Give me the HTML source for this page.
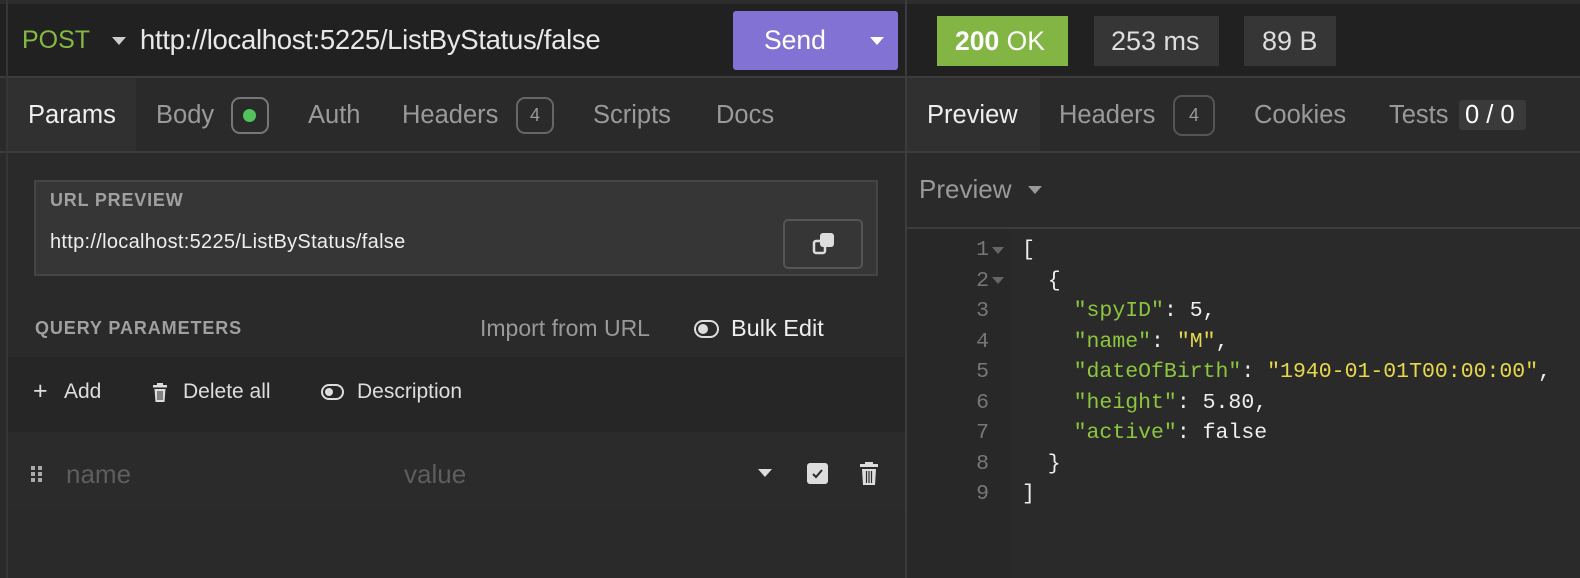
<!DOCTYPE html>
<html><head><meta charset="utf-8"><style>
*{margin:0;padding:0;box-sizing:border-box}
body{width:1580px;height:578px;background:#2a2a2a;font-family:"Liberation Sans",Arial,sans-serif;position:relative;overflow:hidden;color:#ddd}
.a{position:absolute;white-space:nowrap}
.t{font-size:25.5px}
.mono{font-family:"Liberation Mono",monospace;font-size:21.5px}
</style></head><body>
<div class="a" style="left:0;top:0;width:1580px;height:76px;background:#212121"></div>
<div class="a" style="left:0;top:0;width:1580px;height:4px;background:#2c2c2c"></div>
<div class="a" style="left:0;top:76px;width:1580px;height:2px;background:#3c3c3c"></div>
<div class="a" style="left:0;top:151px;width:1580px;height:2px;background:#3c3c3c"></div>
<div class="a" style="left:905px;top:0;width:2px;height:578px;background:#3c3c3c"></div>
<div class="a" style="left:6px;top:0;width:2px;height:578px;background:#363636"></div>
<div class="a" style="left:22px;top:26px;color:#86b944;font-size:25px">POST</div>
<svg class="a" style="left:111px;top:36px" width="16" height="10"><path d="M1 1h14l-7 8z" fill="#ccc"/></svg>
<div class="a" style="left:140px;top:24px;color:#e8e8e8;font-size:27.5px;letter-spacing:-0.3px">http://localhost:5225/ListByStatus/false</div>
<div class="a" style="left:733px;top:11px;width:165px;height:59px;background:#8172d3;border-radius:3px"></div>
<div class="a" style="left:764px;top:25px;color:#fff;font-size:26.5px">Send</div>
<svg class="a" style="left:869px;top:36px" width="16" height="10"><path d="M1 1h14l-7 8z" fill="#fff"/></svg>
<div class="a" style="left:937px;top:16px;width:131px;height:50px;background:#82b544"></div>
<div class="a" style="left:955px;top:26px;color:#fff;font-size:26.5px"><b>200</b> OK</div>
<div class="a" style="left:1094px;top:16px;width:125px;height:50px;background:#363636"></div>
<div class="a" style="left:1111px;top:26px;color:#ddd;font-size:27px">253 ms</div>
<div class="a" style="left:1244px;top:16px;width:92px;height:50px;background:#363636"></div>
<div class="a" style="left:1262px;top:26px;color:#ddd;font-size:27px">89 B</div>
<div class="a" style="left:8px;top:78px;width:128px;height:73px;background:#303030"></div>
<div class="a t" style="left:28px;top:101px;color:#eee">Params</div>
<div class="a t" style="left:156px;top:101px;color:#9a9a9a">Body</div>
<div class="a" style="left:231px;top:97px;width:38px;height:37px;border:2px solid #777;border-radius:9px"></div>
<div class="a" style="left:243px;top:109px;width:13px;height:13px;border-radius:50%;background:#53c15c"></div>
<div class="a t" style="left:308px;top:101px;color:#9a9a9a">Auth</div>
<div class="a t" style="left:402px;top:101px;color:#9a9a9a">Headers</div>
<div class="a" style="left:516px;top:97px;width:38px;height:37px;border:2px solid #666;border-radius:9px;color:#999;font-size:18px;text-align:center;line-height:33px">4</div>
<div class="a t" style="left:593px;top:101px;color:#9a9a9a">Scripts</div>
<div class="a t" style="left:716px;top:101px;color:#9a9a9a">Docs</div>
<div class="a" style="left:907px;top:78px;width:133px;height:73px;background:#303030"></div>
<div class="a t" style="left:927px;top:101px;color:#eee">Preview</div>
<div class="a t" style="left:1059px;top:101px;color:#9a9a9a">Headers</div>
<div class="a" style="left:1173px;top:95px;width:42px;height:41px;border:2px solid #555;border-radius:9px;color:#999;font-size:18px;text-align:center;line-height:37px">4</div>
<div class="a t" style="left:1254px;top:101px;color:#9a9a9a">Cookies</div>
<div class="a t" style="left:1389px;top:101px;color:#9a9a9a">Tests</div>
<div class="a" style="left:1459px;top:100px;width:67px;height:30px;background:#3a3a3a;border-radius:3px;color:#fff;padding-left:6px;line-height:30px;font-size:25.5px">0 / 0</div>
<div class="a" style="left:34px;top:180px;width:844px;height:96px;background:#363636;border:2px solid #454545"></div>
<div class="a" style="left:50px;top:190px;font-size:18px;font-weight:bold;color:#a0a0a0;letter-spacing:0.8px">URL PREVIEW</div>
<div class="a" style="left:50px;top:231px;font-size:20px;color:#eee;letter-spacing:0.3px">http://localhost:5225/ListByStatus/false</div>
<div class="a" style="left:783px;top:219px;width:80px;height:50px;border:2px solid #555;border-radius:5px"></div>
<svg class="a" style="left:812px;top:231px" width="24" height="26"><rect x="2" y="10" width="11" height="12" rx="2" fill="none" stroke="#ddd" stroke-width="2.5"/><rect x="8" y="2" width="14" height="14" rx="3" fill="#ddd"/></svg>
<div class="a" style="left:35px;top:318px;font-size:18px;font-weight:bold;color:#a0a0a0;letter-spacing:0.9px">QUERY PARAMETERS</div>
<div class="a" style="left:480px;top:315px;font-size:23px;color:#999">Import from URL</div>
<div class="a" style="left:694px;top:320px;width:25px;height:18px;border:2.5px solid #ddd;border-radius:9px"></div>
<div class="a" style="left:698px;top:324px;width:10px;height:10px;border-radius:50%;background:#ddd"></div>
<div class="a" style="left:731px;top:315px;font-size:23.5px;color:#eee">Bulk Edit</div>
<div class="a" style="left:8px;top:357px;width:897px;height:75px;background:#262626"></div>
<div class="a" style="left:33px;top:377px;font-size:25px;color:#ddd">+</div>
<div class="a" style="left:64px;top:380px;font-size:21px;color:#ddd">Add</div>
<svg class="a" style="left:152px;top:383px" width="16" height="20"><rect x="1" y="2" width="14" height="2.5" fill="#ddd"/><rect x="5" y="0" width="6" height="2" fill="#ddd"/><path d="M2.5 6h11l-1 13h-9z" fill="#ddd"/><path d="M6 8v9M8 8v9M10 8v9" stroke="#262626" stroke-width="1"/></svg>
<div class="a" style="left:183px;top:380px;font-size:21px;color:#ddd">Delete all</div>
<div class="a" style="left:321px;top:384px;width:23px;height:16px;border:2.5px solid #ddd;border-radius:8px"></div>
<div class="a" style="left:325px;top:388px;width:8px;height:8px;border-radius:50%;background:#ddd"></div>
<div class="a" style="left:357px;top:380px;font-size:21px;color:#ddd">Description</div>
<div class="a" style="left:8px;top:432px;width:897px;height:78px;background:#2b2b2b"></div>
<svg class="a" style="left:30px;top:465px" width="14" height="18"><g fill="#aaa"><rect x="1" y="1" width="4" height="4"/><rect x="8" y="1" width="4" height="4"/><rect x="1" y="7" width="4" height="4"/><rect x="8" y="7" width="4" height="4"/><rect x="1" y="13" width="4" height="4"/><rect x="8" y="13" width="4" height="4"/></g></svg>
<div class="a" style="left:66px;top:459px;color:#5e5e5e;font-size:26px">name</div>
<div class="a" style="left:404px;top:459px;color:#5e5e5e;font-size:26px">value</div>
<svg class="a" style="left:757px;top:468px" width="16" height="10"><path d="M1 1h14l-7 8z" fill="#ddd"/></svg>
<div class="a" style="left:807px;top:463px;width:21px;height:21px;background:#ddd;border-radius:3px"></div>
<svg class="a" style="left:810px;top:466px" width="15" height="15"><path d="M3 8l3 3 6-7" fill="none" stroke="#2a2a2a" stroke-width="2"/></svg>
<svg class="a" style="left:859px;top:462px" width="20" height="24"><rect x="1" y="2" width="18" height="3" fill="#ddd"/><rect x="6" y="0" width="8" height="2.5" fill="#ddd"/><path d="M3 7h14l-1 16h-12z" fill="#ddd"/><path d="M7.5 9v12M10 9v12M12.5 9v12" stroke="#2b2b2b" stroke-width="1.2"/></svg>
<div class="a" style="left:919px;top:174px;font-size:26px;color:#999">Preview</div>
<svg class="a" style="left:1027px;top:185px" width="16" height="10"><path d="M1 1h14l-7 8z" fill="#999"/></svg>
<div class="a" style="left:907px;top:227px;width:673px;height:2px;background:#3c3c3c"></div>
<div class="a" style="left:907px;top:229px;width:103px;height:349px;background:#282828"></div>
<div class="a mono" style="left:975px;top:235px;line-height:30.5px;color:#777;text-align:right;width:14px">1<br>2<br>3<br>4<br>5<br>6<br>7<br>8<br>9</div>
<svg class="a" style="left:991px;top:246px" width="16" height="40"><path d="M1 1h12l-6 7z M1 31h12l-6 7z" fill="#666"/></svg>
<div class="a mono" style="left:1022px;top:235px;line-height:30.5px;color:#eee;white-space:pre">[
  {
    <span style="color:#8cc63f">"spyID"</span>: 5,
    <span style="color:#8cc63f">"name"</span>: <span style="color:#e7d84b">"M"</span>,
    <span style="color:#8cc63f">"dateOfBirth"</span>: <span style="color:#e7d84b">"1940-01-01T00:00:00"</span>,
    <span style="color:#8cc63f">"height"</span>: 5.80,
    <span style="color:#8cc63f">"active"</span>: false
  }
]</div>
</body></html>
